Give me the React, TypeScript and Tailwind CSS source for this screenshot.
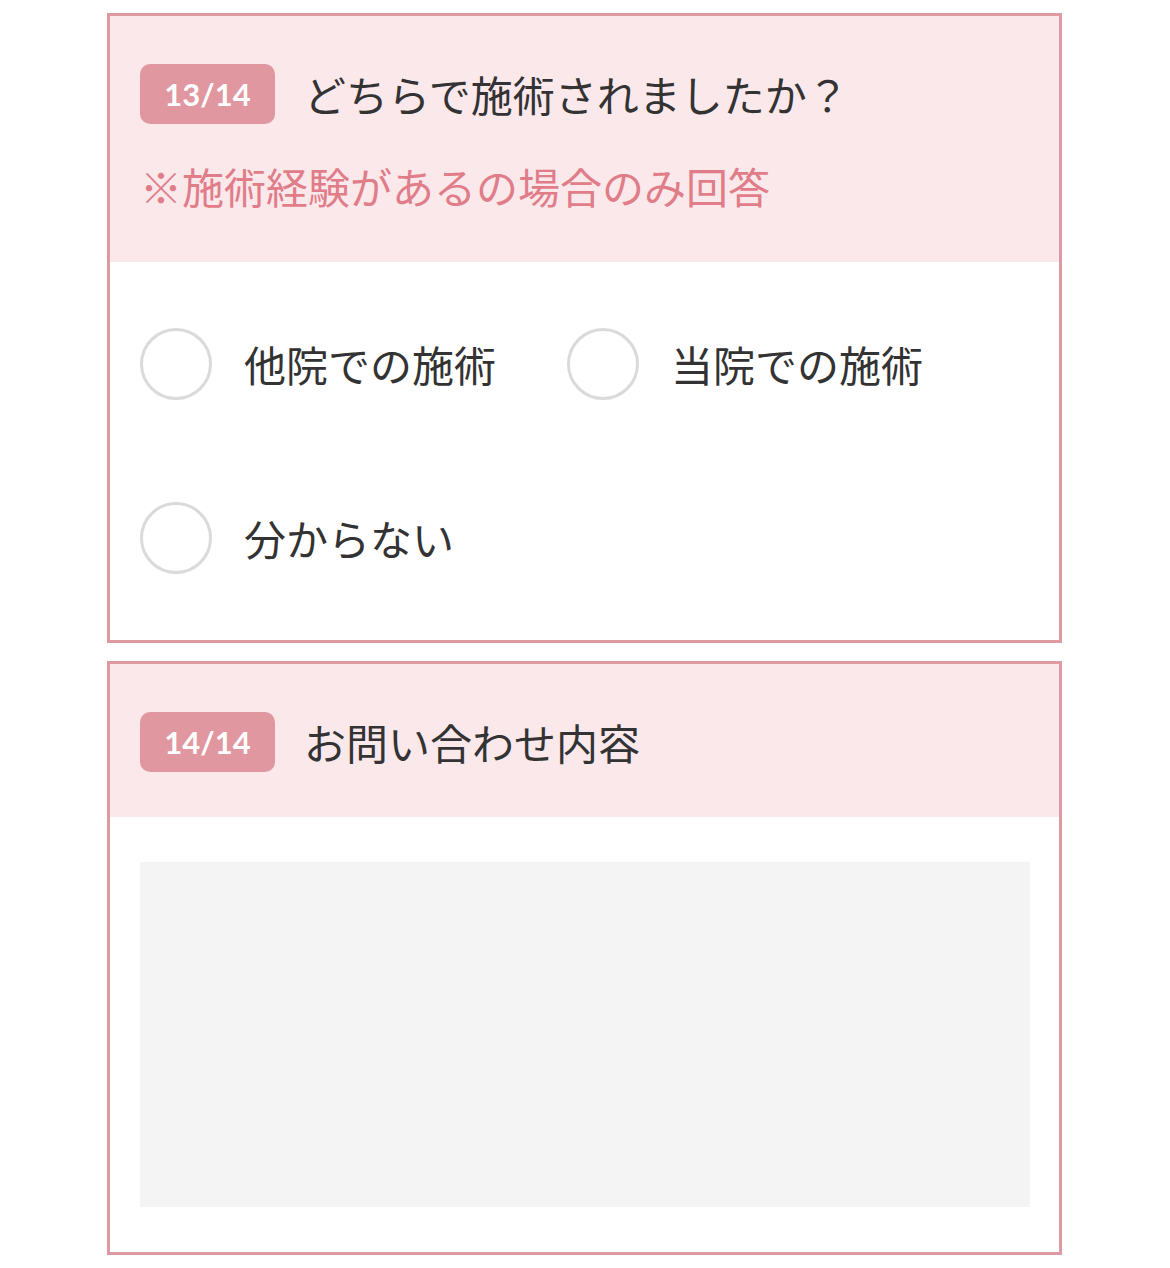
const jp = { fontFamily: '"Noto Sans CJK JP", "Noto Sans", sans-serif' };

function Badge({ label }: { label: string }) {
  return (
    <span
      className="flex h-[60px] w-[135px] shrink-0 items-center justify-center rounded-[10px] bg-[#e0979f] text-[31px] font-bold text-white"
      style={{ fontFamily: 'Lato, "Open Sans", sans-serif' }}
    >
      {label}
    </span>
  );
}

function Radio({ label, width }: { label: string; width?: string }) {
  return (
    <label className={`flex items-center ${width ?? ''}`}>
      <span className="h-[72px] w-[72px] shrink-0 rounded-full border-[3px] border-[#dadada] bg-white" />
      <span className="ml-[32px] text-[42px] leading-none text-[#333]">{label}</span>
    </label>
  );
}

export default function App() {
  return (
    <div className="min-h-[1268px] bg-white pt-[13px]" style={jp}>
      <div className="ml-[107px] w-[955px] border-[3px] border-[#dd9aa3]">
        <div className="bg-[#fbe8eb] px-[30px] pb-[52px] pt-[48px]">
          <div className="flex items-center gap-[29px]">
            <Badge label="13/14" />
            <span className="text-[42px] leading-none text-[#333]">どちらで施術されましたか？</span>
          </div>
          <p className="mt-[38px] text-[42px] leading-[48px] text-[#e07d88]">※施術経験があるの場合のみ回答</p>
        </div>
        <div className="flex flex-col gap-[102px] px-[30px] py-[66px]">
          <div className="flex">
            <Radio label="他院での施術" width="w-[427px]" />
            <Radio label="当院での施術" />
          </div>
          <Radio label="分からない" />
        </div>
      </div>

      <div className="ml-[107px] mt-[18px] w-[955px] border-[3px] border-[#dd9aa3]">
        <div className="flex items-center gap-[29px] bg-[#fbe8eb] px-[30px] pb-[45px] pt-[48px]">
          <Badge label="14/14" />
          <span className="text-[42px] leading-none text-[#333]">お問い合わせ内容</span>
        </div>
        <div className="px-[30px] py-[45px]">
          <textarea className="block h-[345px] w-[890px] resize-none bg-[#f4f4f4] outline-none" />
        </div>
      </div>
    </div>
  );
}
